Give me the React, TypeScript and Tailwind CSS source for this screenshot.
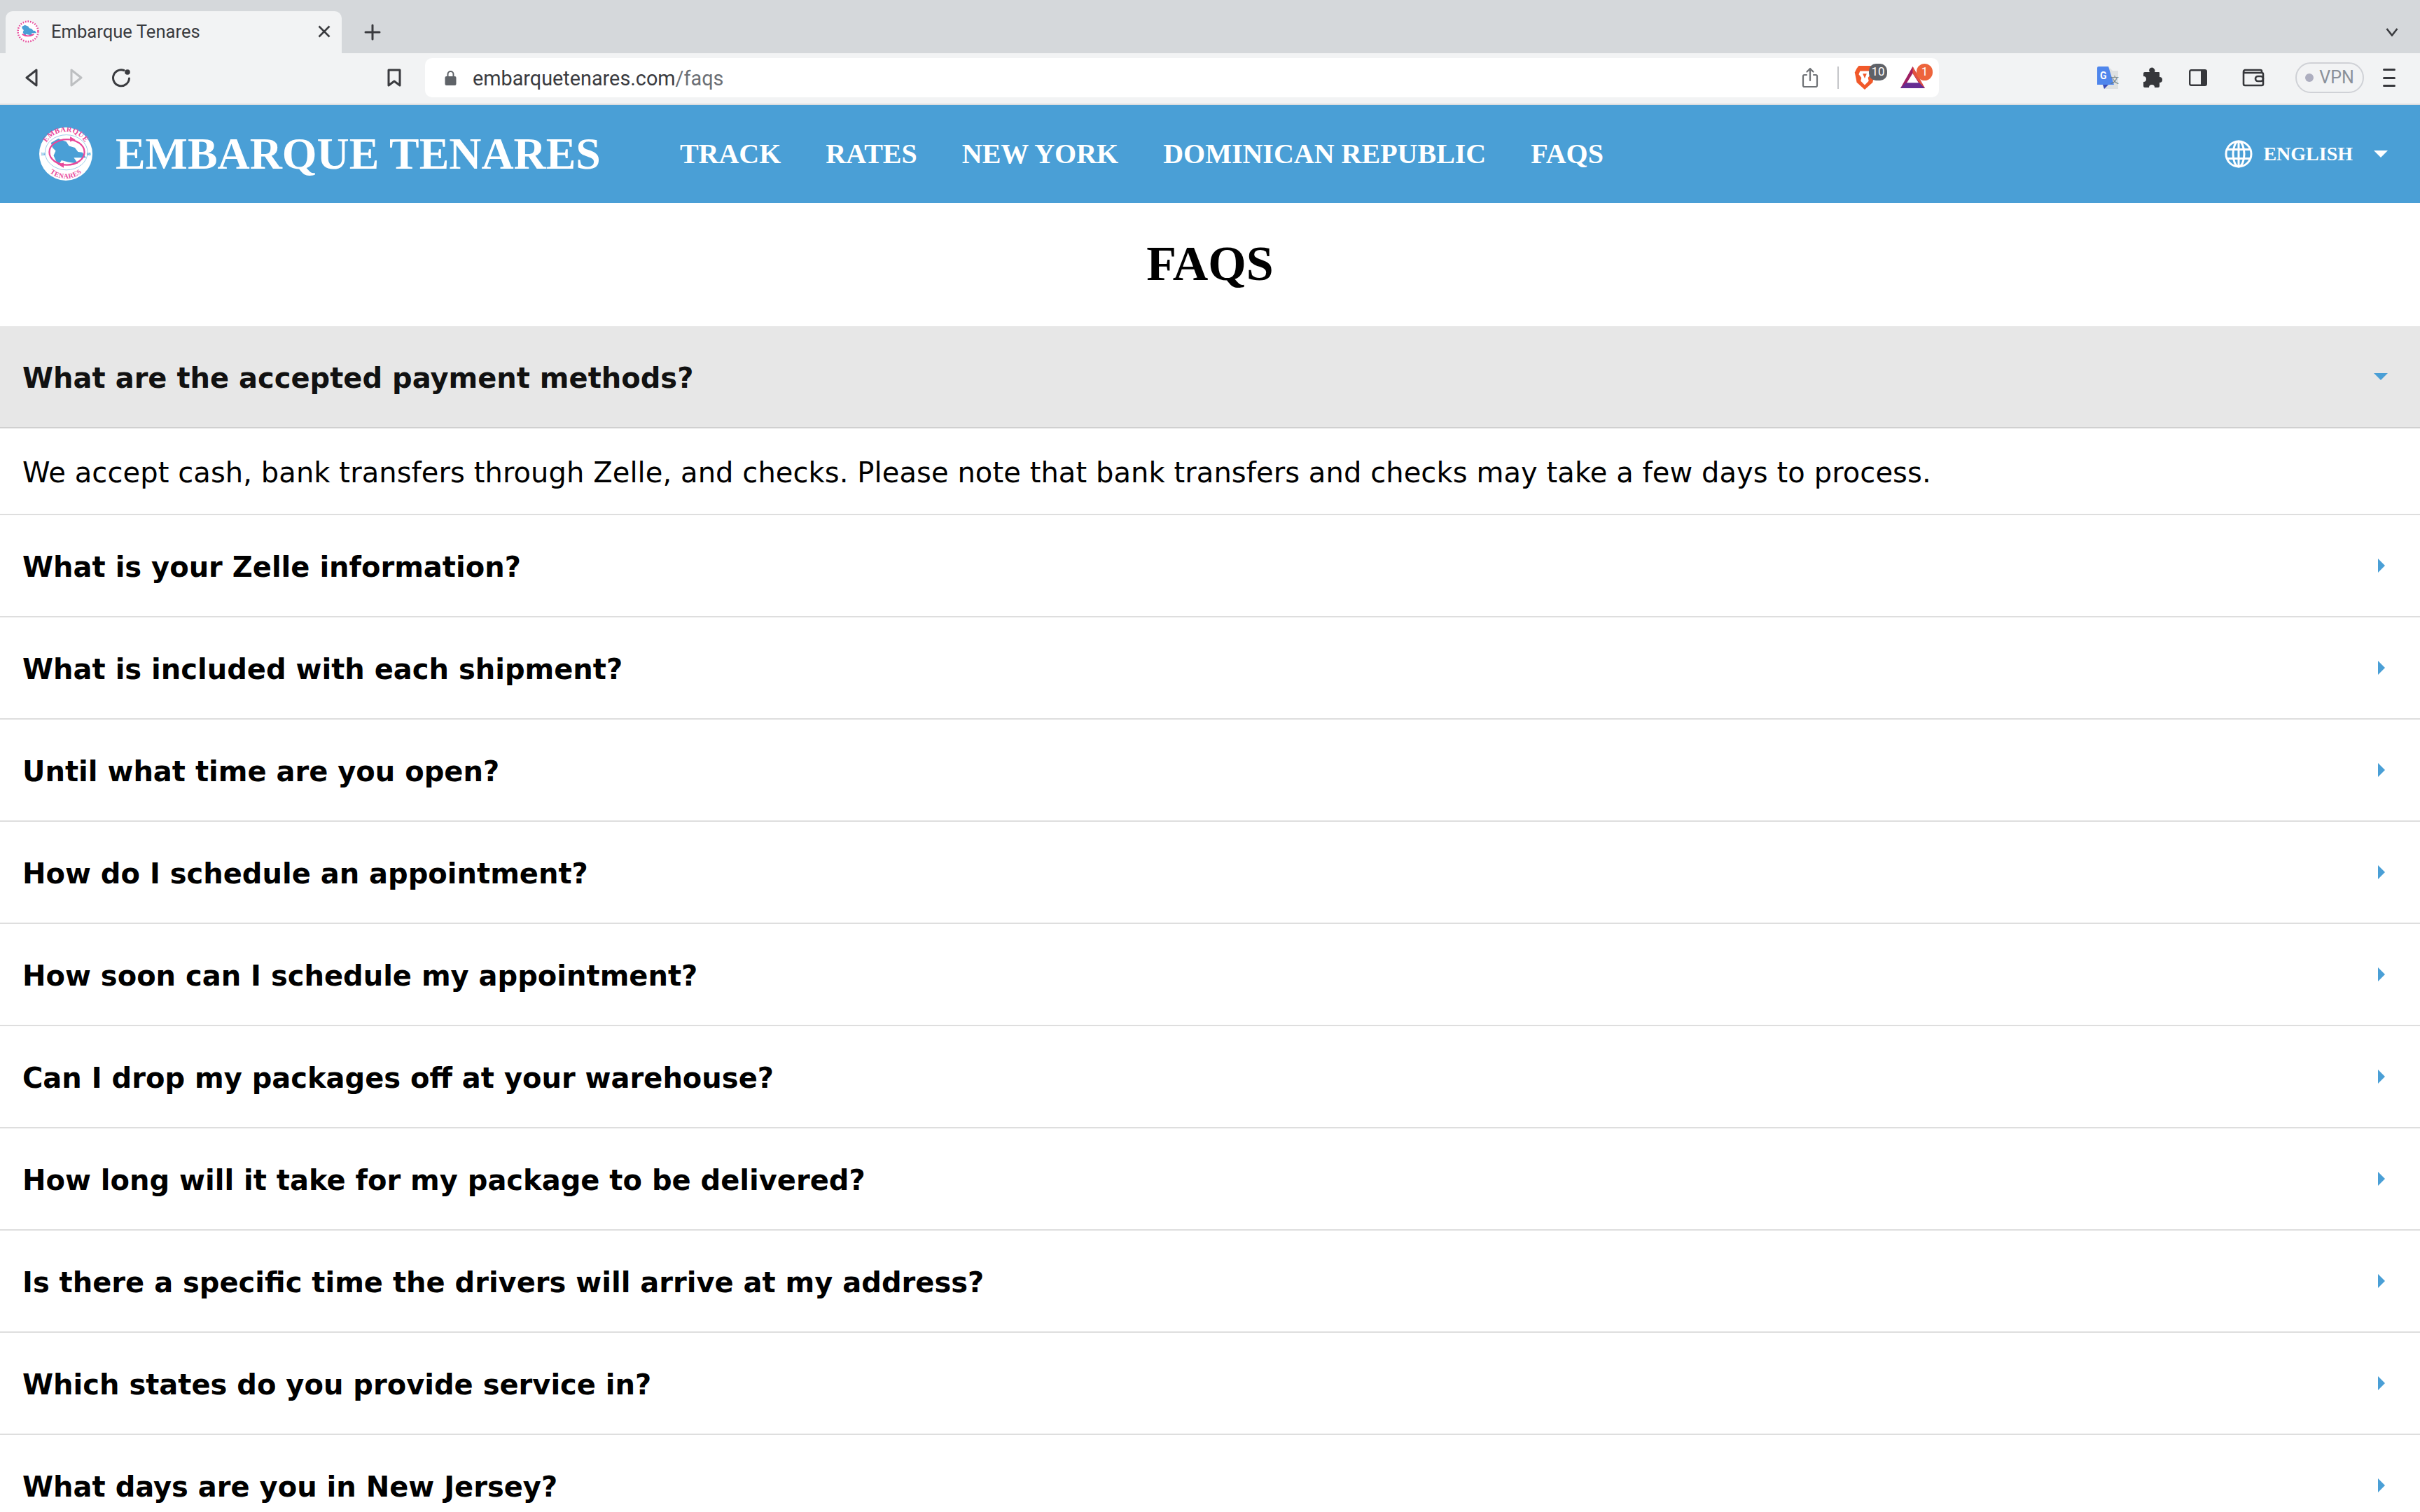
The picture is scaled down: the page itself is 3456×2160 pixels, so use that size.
import type { ReactElement } from 'react';

const NAV_LINKS = ['TRACK', 'RATES', 'NEW YORK', 'DOMINICAN REPUBLIC', 'FAQS'];

const QUESTIONS = [
  'What is your Zelle information?',
  'What is included with each shipment?',
  'Until what time are you open?',
  'How do I schedule an appointment?',
  'How soon can I schedule my appointment?',
  'Can I drop my packages off at your warehouse?',
  'How long will it take for my package to be delivered?',
  'Is there a specific time the drivers will arrive at my address?',
  'Which states do you provide service in?',
  'What days are you in New Jersey?',
];

const MAP_OUTLINE =
  'M22 29 L36 21 L51 27 L56 35 L67 38 L73 46 L81 47 L88 57 L71 57 L65 57 L73 68 L54 65 L42 62 L36 71 L31 62 L27 53 L31 44 L25 38 Z';

// ── Logo ─────────────────────────────────────────────────────────────────

function Logo({ size }: { size: number }): ReactElement {
  return (
    <svg width={size} height={size} viewBox="0 0 100 100" className="shrink-0">
      <defs>
        <path id="logo-top" d="M8 50 A42 42 0 0 1 92 50" />
        <path id="logo-bottom" d="M4 50 A46 46 0 0 0 96 50" />
      </defs>
      <circle cx="50" cy="50" r="50" fill="#fff" />
      <ellipse cx="51" cy="47" rx="40" ry="33" fill="none" stroke="#4a9fd6" strokeWidth="0.7" />
      <path d={MAP_OUTLINE} fill="#4a9fd6" />
      <ellipse cx="52" cy="46.500" rx="33" ry="24" fill="none" stroke="#e8489a" strokeWidth="3" />
      <path d="M58 17 L68 23 L58 27 Z M46 66 L36 70 L46 76 Z" fill="#e8489a" />
      <text fontFamily="'Liberation Serif', serif" fontWeight="700" fontSize="14" fill="#e8489a" letterSpacing="0.6">
        <textPath href="#logo-top" startOffset="50%" textAnchor="middle">EMBARQUE</textPath>
      </text>
      <text fontFamily="'Liberation Serif', serif" fontWeight="700" fontSize="13" fill="#e8489a" letterSpacing="0.6">
        <textPath href="#logo-bottom" startOffset="50%" textAnchor="middle">TENARES</textPath>
      </text>
      <text x="3" y="53" fontFamily="'Liberation Sans', sans-serif" fontSize="7" fill="#4a9fd6">19</text>
      <text x="89" y="53" fontFamily="'Liberation Sans', sans-serif" fontSize="7" fill="#4a9fd6">98</text>
    </svg>
  );
}

function Favicon(): ReactElement {
  return (
    <svg width="32" height="32" viewBox="0 0 100 100" className="shrink-0">
      <circle cx="50" cy="50" r="45" fill="#fff" stroke="#e8489a" strokeWidth="8" strokeDasharray="5 6" />
      <path d={MAP_OUTLINE} fill="#4a9fd6" />
      <path d="M24 62 Q50 78 76 62" fill="none" stroke="#e8489a" strokeWidth="6" />
    </svg>
  );
}

// ── Browser chrome ───────────────────────────────────────────────────────

function BrowserTabs(): ReactElement {
  return (
    <div className="flex h-[76px] shrink-0 items-end bg-[#d5d8db] pl-2">
      <div className="flex h-[60px] w-[480px] items-center rounded-t-[10px] bg-[#f2f3f4] pb-[2px] pl-[16px] pr-[16px]">
        <Favicon />
        <span className="ml-[17px] flex-1 font-['Roboto',sans-serif] text-[25.6px] text-[#3a3b3f]">Embarque Tenares</span>
        <svg width="18" height="18" viewBox="0 0 18 18" fill="none" stroke="#3a3b3f" strokeWidth="2.6">
          <path d="M1.5 1.5 16.5 16.5M16.5 1.5 1.5 16.5" />
        </svg>
      </div>
      <div className="mb-[18px] ml-[32px] flex-1">
        <svg width="24" height="24" viewBox="0 0 24 24" stroke="#3a3b3f" strokeWidth="3" strokeLinecap="round">
          <path d="M12 2v20M2 12h20" />
        </svg>
      </div>
      <svg width="18" height="12" viewBox="0 0 18 12" fill="none" stroke="#3a3b3f" strokeWidth="2.6" className="mb-[24px] mr-[31px]">
        <path d="M1.5 1 9 10.5 16.5 1" />
      </svg>
    </div>
  );
}

function AddressBar(): ReactElement {
  return (
    <div className="flex h-[56px] w-[2162px] items-center rounded-[10px] bg-white pl-[28px] pr-[8px]">
      <svg width="17" height="22" viewBox="0 0 17 22" fill="#5f6368">
        <path d="M3.5 9V6a5 5 0 0 1 10 0v3h1a2 2 0 0 1 2 2v9a2 2 0 0 1-2 2h-12a2 2 0 0 1-2-2v-9a2 2 0 0 1 2-2h1Zm2 0h6V6a3 3 0 0 0-6 0v3Z" />
      </svg>
      <span className="ml-[23px] flex-1 pt-[3px] font-['Roboto',sans-serif] text-[28.8px] text-[#3a3b3f]">
        embarquetenares.com<span className="text-[#6b6f75]">/faqs</span>
      </span>
      <svg width="24" height="30" viewBox="0 0 24 30" fill="none" stroke="#6f7276" strokeWidth="2.2" strokeLinecap="round" strokeLinejoin="round">
        <path d="M7 11H4a2 2 0 0 0-2 2v13a2 2 0 0 0 2 2h16a2 2 0 0 0 2-2V13a2 2 0 0 0-2-2h-3M12 19V2M7.5 6.5 12 2l4.500 4.500" />
      </svg>
      <div className="ml-[27px] h-[32px] w-[2px] bg-[#c4c6c9]" />
      {/* Brave shields and rewards badges */}
      <div className="relative ml-[22px] h-[44px] w-[50px]">
        <svg width="30" height="36" viewBox="0 0 30 38" className="absolute bottom-[4px] left-0">
          <path d="M6 1h18l3 4 3 6-3 15-12 11L3 26 0 11l3-6Z" fill="#f1592a" />
          <path d="M8 9h14l2 5-4 5 1 5-6 6-6-6 1-5-4-5Z" fill="#fff" />
          <path d="M12 13h6l-3 7Z" fill="#f1592a" />
        </svg>
        <span className="absolute left-[21px] top-[2px] flex h-[24px] w-[26px] items-center justify-center rounded-[10px] bg-[#5f6268] font-['Roboto',sans-serif] text-[17px] text-white">
          10
        </span>
      </div>
      <div className="relative ml-[15px] h-[44px] w-[48px]">
        <svg width="37" height="31" viewBox="0 0 36 32" className="absolute bottom-[7px] left-0">
          <path d="M18 0 36 32H0Z" fill="#9e1f63" />
          <path d="M18 10 28 26H8Z" fill="#fff" />
          <path d="M0 32 8 24H28L36 32Z" fill="#662d91" />
          <path d="M18 0 36 32 28 24 18 10Z" fill="#e2523f" />
        </svg>
        <span className="absolute left-[24px] top-[2px] flex h-[24px] w-[23px] items-center justify-center rounded-full bg-[#ed643c] font-['Roboto',sans-serif] text-[17px] text-white">
          1
        </span>
      </div>
    </div>
  );
}

function BrowserToolbar(): ReactElement {
  return (
    <div className="flex h-[74px] shrink-0 items-center border-b-2 border-[#dcdee0] bg-[#f2f3f4] pb-[2px]">
      <svg width="20" height="26" viewBox="0 0 20 26" fill="none" stroke="#3a3b3f" strokeWidth="3" strokeLinejoin="round" className="ml-[35px]">
        <path d="M17 2v22L3 13Z" />
      </svg>
      <svg width="20" height="26" viewBox="0 0 20 26" fill="none" stroke="#bdbfc1" strokeWidth="3" strokeLinejoin="round" className="ml-[44px]">
        <path d="M3 2v22l14-11Z" />
      </svg>
      <svg width="28" height="28" viewBox="0 0 28 28" fill="none" stroke="#3a3b3f" strokeWidth="3" strokeLinecap="round" className="ml-[40px]">
        <path d="M18 3.500A11.500 11.500 0 1 0 25.500 15" />
        <circle cx="23" cy="6" r="3.800" fill="#3a3b3f" stroke="none" />
      </svg>
      <svg width="20" height="26" viewBox="0 0 20 26" fill="none" stroke="#3a3b3f" strokeWidth="3" strokeLinejoin="round" className="ml-[366px]">
        <path d="M2 2h16v22l-8-6-8 6Z" />
      </svg>
      <div className="ml-[34px]">
        <AddressBar />
      </div>
      <svg width="32" height="32" viewBox="0 0 32 32" className="ml-[226px]">
        <path d="M2 0h14l6 6h8v26H10l-2-6H2Z" fill="#dfe1e2" />
        <path d="M0 2a2 2 0 0 1 2-2h14l8 26H0Z" fill="#4f86ec" />
        <path d="M8 26h8l-6 6Z" fill="#3c4fb8" />
        <text x="4" y="18" fontFamily="'Roboto', sans-serif" fontWeight="700" fontSize="14" fill="#fff">G</text>
        <text x="19" y="24" fontFamily="'Noto Sans CJK SC', sans-serif" fontSize="12" fill="#6f7c7c">文</text>
      </svg>
      <svg width="30" height="30" viewBox="0 0 30 30" fill="#36373b" className="ml-[34px]">
        <path d="M2 7h7a4.500 4.500 0 0 1 1-6 4.500 4.500 0 0 1 6 6h6a1 1 0 0 1 1 1v6a4 4 0 1 1 0 8v5a2 2 0 0 1-2 2h-5a4 4 0 0 0-8 0H2a2 2 0 0 1-2-2v-6a4 4 0 0 0 0-8V9a2 2 0 0 1 2-2Z" />
      </svg>
      <svg width="26" height="24" viewBox="0 0 26 24" fill="none" className="ml-[35px]">
        <rect x="1.200" y="1.200" width="23.600" height="21.600" rx="2" stroke="#36373b" strokeWidth="2.400" />
        <rect x="17" y="1" width="8" height="22" fill="#36373b" />
      </svg>
      <svg width="32" height="26" viewBox="0 0 32 26" fill="none" stroke="#36373b" strokeWidth="2.600" className="ml-[50px]">
        <path d="M28 6V4a2 2 0 0 0-2-2H4a3 3 0 0 0-2 3v17a2 2 0 0 0 2 2h24a2 2 0 0 0 2-2V8a2 2 0 0 0-2-2H3" />
        <rect x="19" y="11" width="11" height="7" rx="3.500" />
      </svg>
      <div className="ml-[44px] flex h-[44px] w-[98px] items-center justify-center gap-[8px] rounded-full border-2 border-[#cfd1d6]">
        <span className="h-[12px] w-[12px] rounded-full bg-[#adaebf]" />
        <span className="font-['Roboto',sans-serif] text-[25px] text-[#8a9099]">VPN</span>
      </div>
      <div className="ml-[27px] flex h-[26px] w-[18px] flex-col justify-between">
        <span className="h-[3px] rounded bg-[#36373b]" />
        <span className="h-[3px] rounded bg-[#36373b]" />
        <span className="h-[3px] rounded bg-[#36373b]" />
      </div>
    </div>
  );
}

// ── Site header ──────────────────────────────────────────────────────────

function SiteHeader(): ReactElement {
  return (
    <header className="flex h-[140px] shrink-0 items-center bg-[#4a9fd6] pl-[56px] pr-[46px] font-['Liberation_Serif',serif] font-bold text-white">
      <Logo size={76} />
      <span className="ml-[33px] text-[63.9px] leading-none">EMBARQUE TENARES</span>
      <nav className="ml-[113px] flex items-center gap-[64px] text-[40px] leading-none">
        {NAV_LINKS.map((link) => (
          <a key={link}>{link}</a>
        ))}
      </nav>
      <div className="ml-auto flex items-center">
        <svg width="40" height="40" viewBox="0 0 40 40" fill="none" stroke="#fff" strokeWidth="3">
          <circle cx="20" cy="20" r="18" />
          <ellipse cx="20" cy="20" rx="8" ry="18" />
          <path d="M20 2v36M3 13.500h34M3 26.500h34" />
        </svg>
        <span className="ml-[15px] text-[28px] leading-none">ENGLISH</span>
        <svg width="20" height="10" viewBox="0 0 20 10" fill="#fff" className="ml-[30px]">
          <path d="M0 0h20L10 10Z" />
        </svg>
      </div>
    </header>
  );
}

// ── FAQ ──────────────────────────────────────────────────────────────────

function FaqRow({ question }: { question: string }): ReactElement {
  return (
    <div className="flex h-[146px] shrink-0 items-center justify-between border-b-2 border-[#dedede] pl-[32px] pr-[50px]">
      <span className="pt-[3px] text-[40px] font-bold text-black">{question}</span>
      <svg width="10" height="20" viewBox="0 0 10 20" fill="#4a9fd6">
        <path d="M0 0 10 10 0 20Z" />
      </svg>
    </div>
  );
}

export default function App(): ReactElement {
  return (
    <div className="flex h-screen flex-col overflow-hidden bg-white">
      <BrowserTabs />
      <BrowserToolbar />
      <SiteHeader />
      <h1 className="flex h-[176px] shrink-0 items-center justify-center pb-[2px] font-['Liberation_Serif',serif] text-[70px] font-bold leading-none text-black">
        FAQS
      </h1>
      <div className="flex flex-col font-['DejaVu_Sans',sans-serif]">
        <div className="flex h-[146px] shrink-0 items-center justify-between border-b-2 border-[#d0d0d0] bg-[#e7e7e7] pl-[32px] pr-[46px]">
          <span className="pt-[3px] text-[40px] font-bold text-[#111]">What are the accepted payment methods?</span>
          <svg width="20" height="10" viewBox="0 0 20 10" fill="#4a9fd6">
            <path d="M0 0h20L10 10Z" />
          </svg>
        </div>
        <div className="flex h-[124px] shrink-0 items-center border-b-2 border-[#dedede] pl-[32px]">
          <span className="pt-[3px] text-[40px] tracking-[0.08px] text-black">
            We accept cash, bank transfers through Zelle, and checks. Please note that bank transfers and checks may take a few days to process.
          </span>
        </div>
        {QUESTIONS.map((question) => (
          <FaqRow key={question} question={question} />
        ))}
      </div>
    </div>
  );
}
